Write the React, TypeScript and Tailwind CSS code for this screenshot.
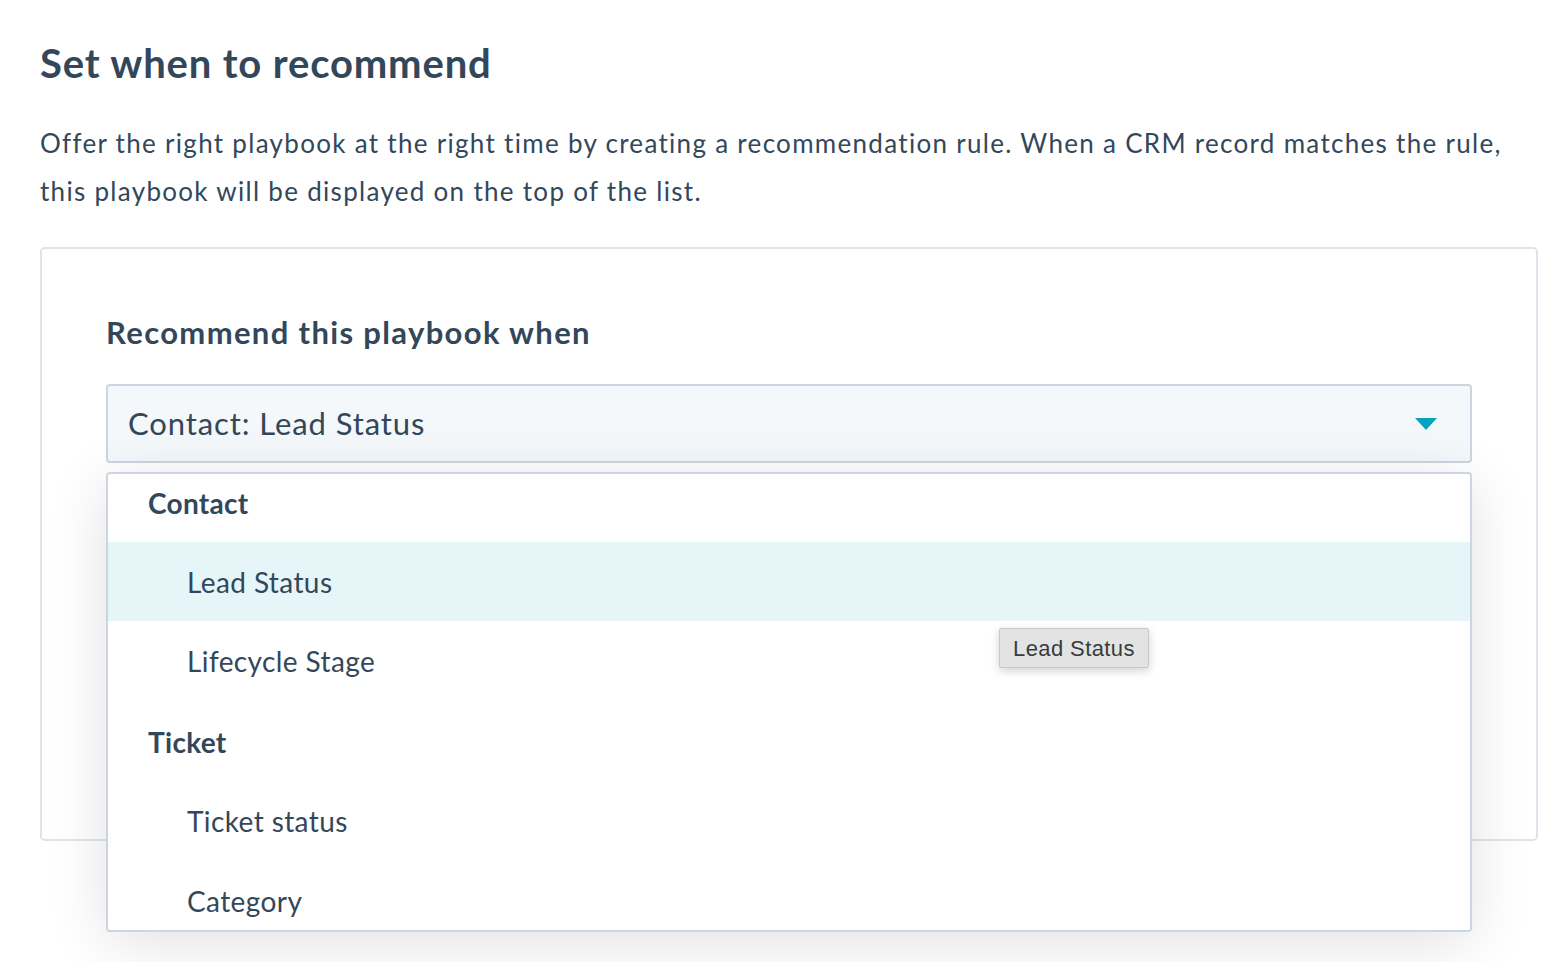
import React from 'react';

const font = { fontFamily: 'Lato, "Noto Sans", sans-serif' };

const Caret = () => (
  <svg width="24" height="14" viewBox="0 0 24 14" className="shrink-0">
    <path d="M1 1 L23 1 L12 13 Z" fill="#00a4bd" />
  </svg>
);

const MenuHeader = ({ label, className }: { label: string; className: string }) => (
  <div className={`flex items-center pl-[40px] text-[28px] font-bold tracking-[0.3px] text-[#33475b] ${className}`}>
    {label}
  </div>
);

const MenuItem = ({ label, active, className }: { label: string; active?: boolean; className: string }) => (
  <div
    className={`flex items-center pl-[79px] text-[28px] tracking-[0.4px] text-[#33475b] ${active ? 'bg-[#e5f5f8]' : 'bg-white'} ${className}`}
  >
    {label}
  </div>
);

export default function App() {
  return (
    <div className="min-h-[962px] bg-white pl-[40px] pr-[30px] pt-[38px]" style={font}>
      <h1 className="text-[40px] font-bold leading-[50px] tracking-[0.85px] text-[#33475b]">Set when to recommend</h1>
      <p className="mt-[31px] text-[26px] leading-[48px] tracking-[1.3px] text-[#33475b]">
        Offer the right playbook at the right time by creating a recommendation rule. When a CRM record matches the rule,
        <br />
        this playbook will be displayed on the top of the list.
      </p>

      <div className="relative mt-[32px] h-[594px] rounded-[5px] border-2 border-[#dfe3eb] bg-white px-[64px] pt-[63px]">
        <h2 className="text-[31px] font-bold leading-[40px] tracking-[1.35px] text-[#33475b]">
          Recommend this playbook when
        </h2>

        <div className="relative mt-[32px]">
          <div className="flex h-[79px] items-center justify-between rounded-[4px] border-2 border-[#cbd6e2] bg-[#f5f8fa] pl-[20px] pr-[32px]">
            <span className="text-[31px] tracking-[0.9px] text-[#33475b]">Contact: Lead Status</span>
            <Caret />
          </div>

          <div className="absolute left-0 right-0 top-[88px] z-10 h-[460px] overflow-hidden rounded-[4px] border-2 border-[#cbd6e2] bg-white shadow-[0_10px_60px_rgba(0,0,0,0.12)]">
            <MenuHeader label="Contact" className="h-[68px] pb-[10px]" />
            <MenuItem label="Lead Status" active className="h-[79px]" />
            <MenuItem label="Lifecycle Stage" className="h-[80px]" />
            <MenuHeader label="Ticket" className="h-[80px] pt-[2px]" />
            <MenuItem label="Ticket status" className="h-[80px]" />
            <MenuItem label="Category" className="h-[80px]" />
          </div>

          <div
            className="absolute left-[893px] top-[244px] z-20 flex h-[40px] items-center rounded-[2px] border border-[#c8c8c8] bg-[#e2e4e4] px-[13px] text-[22px] tracking-[0.4px] text-[#3b3b3b] shadow-[0_3px_10px_rgba(0,0,0,0.18)]"
            style={{ fontFamily: '"Liberation Sans", Arial, sans-serif' }}
          >
            Lead Status
          </div>
        </div>
      </div>
    </div>
  );
}
